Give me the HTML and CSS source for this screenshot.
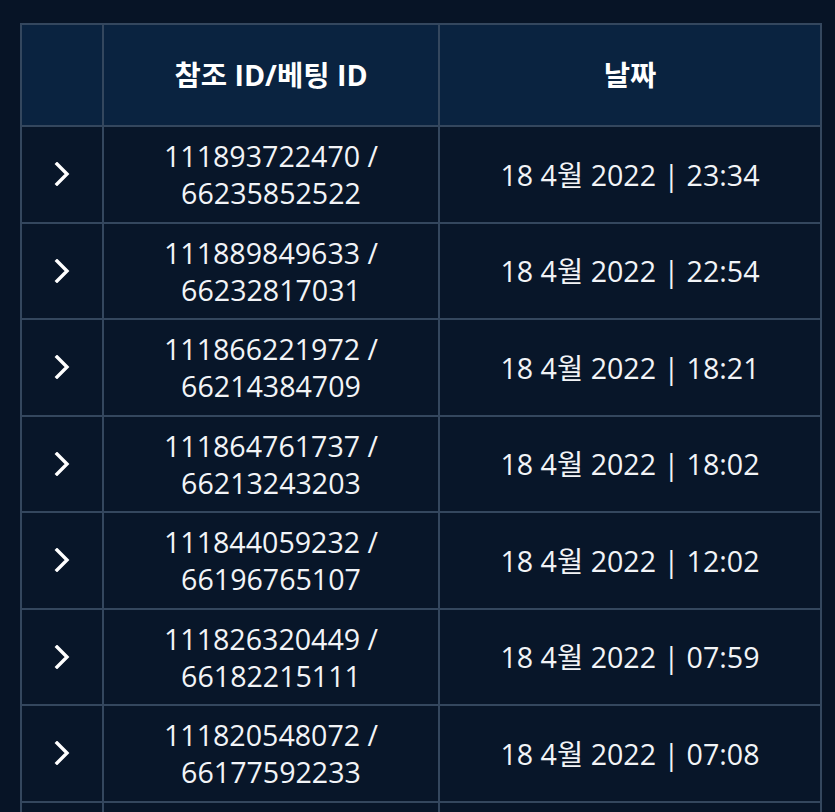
FILE: index.html
```html
<!DOCTYPE html>
<html lang="ko">
<head>
  <meta charset="UTF-8" />
  <title>베팅 내역</title>
  <link rel="stylesheet" href="styles.css">
</head>
<body>

<table class="history">
  <colgroup>
    <col class="col-toggle">
    <col class="col-ref">
    <col class="col-date">
  </colgroup>
  <thead>
    <tr>
      <th></th>
      <th>참조 ID/베팅 ID</th>
      <th>날짜</th>
    </tr>
  </thead>
  <tbody>
    <tr>
      <td class="toggle"><svg viewBox="0 0 24 24" width="24" height="24"><path d="M7 2 L17 12 L7 22" /></svg></td>
      <td>111893722470 /<br>66235852522</td>
      <td>18 4월 2022 | 23:34</td>
    </tr>
    <tr>
      <td class="toggle"><svg viewBox="0 0 24 24" width="24" height="24"><path d="M7 2 L17 12 L7 22" /></svg></td>
      <td>111889849633 /<br>66232817031</td>
      <td>18 4월 2022 | 22:54</td>
    </tr>
    <tr>
      <td class="toggle"><svg viewBox="0 0 24 24" width="24" height="24"><path d="M7 2 L17 12 L7 22" /></svg></td>
      <td>111866221972 /<br>66214384709</td>
      <td>18 4월 2022 | 18:21</td>
    </tr>
    <tr>
      <td class="toggle"><svg viewBox="0 0 24 24" width="24" height="24"><path d="M7 2 L17 12 L7 22" /></svg></td>
      <td>111864761737 /<br>66213243203</td>
      <td>18 4월 2022 | 18:02</td>
    </tr>
    <tr>
      <td class="toggle"><svg viewBox="0 0 24 24" width="24" height="24"><path d="M7 2 L17 12 L7 22" /></svg></td>
      <td>111844059232 /<br>66196765107</td>
      <td>18 4월 2022 | 12:02</td>
    </tr>
    <tr>
      <td class="toggle"><svg viewBox="0 0 24 24" width="24" height="24"><path d="M7 2 L17 12 L7 22" /></svg></td>
      <td>111826320449 /<br>66182215111</td>
      <td>18 4월 2022 | 07:59</td>
    </tr>
    <tr>
      <td class="toggle"><svg viewBox="0 0 24 24" width="24" height="24"><path d="M7 2 L17 12 L7 22" /></svg></td>
      <td>111820548072 /<br>66177592233</td>
      <td>18 4월 2022 | 07:08</td>
    </tr>
    <!-- next row only peeks in at the bottom edge -->
    <tr class="more">
      <td></td>
      <td></td>
      <td></td>
    </tr>
  </tbody>
</table>

</body>
</html>
```

FILE: styles.css
```css
body {
  margin: 0;
  padding: 23px 15px 0 20px;
  background: #071426;
  color: #f2f4f7;
  font-family: "Open Sans", "Noto Sans CJK KR", sans-serif;
  font-size: 28.6px;
  height: 812px;
  box-sizing: border-box;
  overflow: hidden;
}
.history {
  border-collapse: collapse;
  table-layout: fixed;
  width: 800px;
}
.col-toggle { width: 82px; }
.col-ref { width: 336px; }
.col-date { width: 382px; }
.history th,
.history td {
  border: 2px solid #34475e;
  text-align: center;
  vertical-align: middle;
}
.history th {
  background: #0a2340;
  height: 100px;
  padding: 0;
  font-weight: 700;
  color: #fff;
  line-height: 36px;
}
.history td {
  background: #081629;
  height: 94.5px;
  padding: 0;
  line-height: 37px;
}
.toggle svg {
  display: block;
  margin: 0 auto;
  fill: none;
  stroke: #fff;
  stroke-width: 3.4;
  stroke-linecap: square;
}
```
